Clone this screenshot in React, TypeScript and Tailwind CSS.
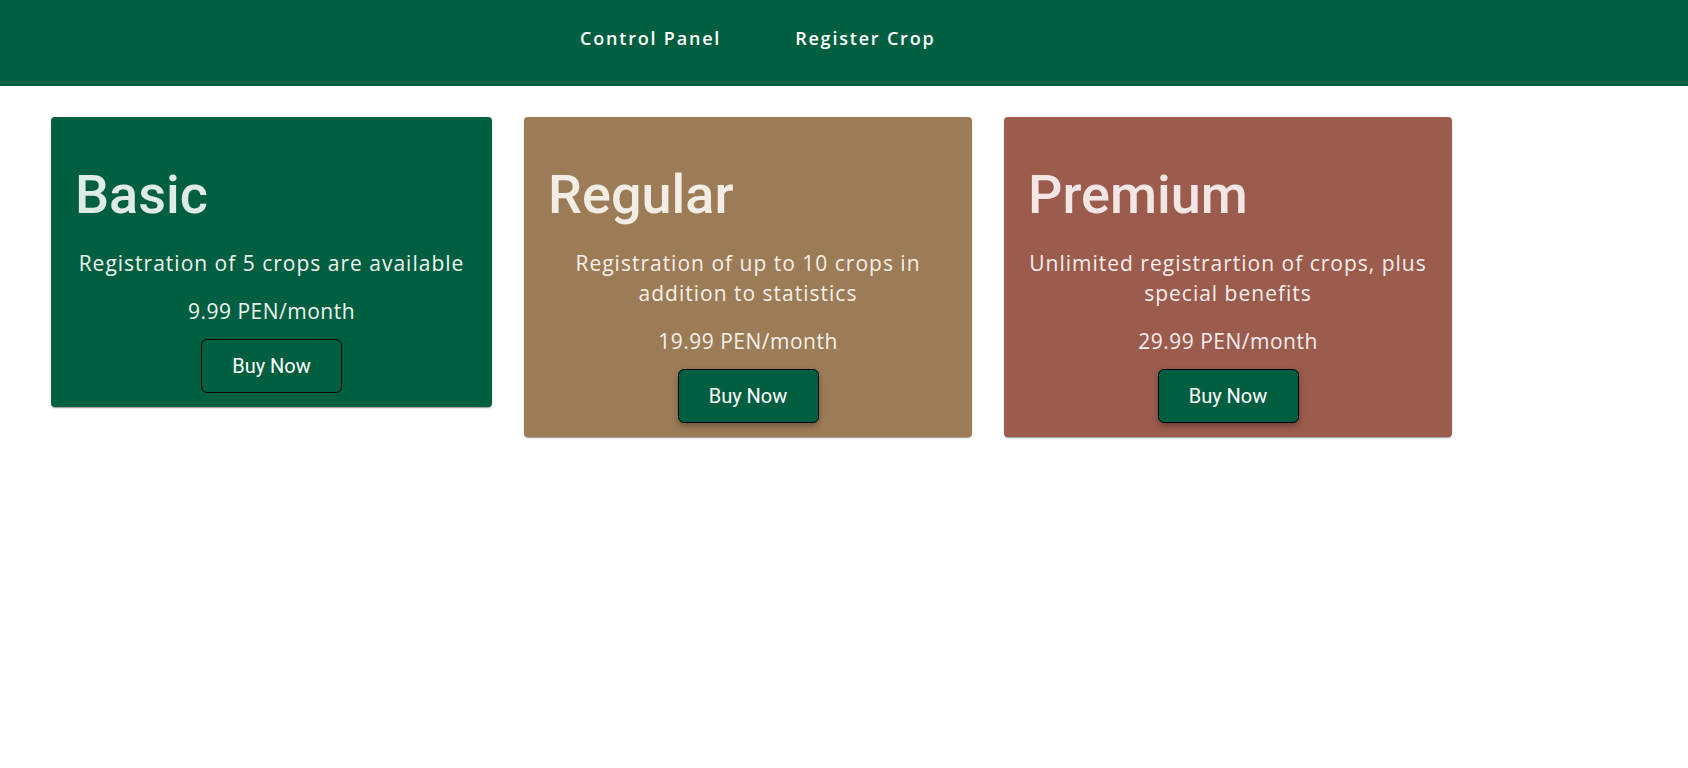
const plans = [
  {
    name: 'Basic',
    text: 'Registration of 5 crops are available',
    price: '9.99 PEN/month',
    card: 'w-[441px] bg-[#005f41]',
    title: 'text-[#dfebe5]',
    body: 'text-[#eef5f1]',
    button: 'shadow-none',
  },
  {
    name: 'Regular',
    text: 'Registration of up to 10 crops in addition to statistics',
    price: '19.99 PEN/month',
    card: 'w-[448px] bg-[#9c7c57]',
    title: 'text-[#f3ede6]',
    body: 'text-[#f6f0ea]',
    button: 'shadow-[0_3px_6px_rgba(0,0,0,0.3)]',
  },
  {
    name: 'Premium',
    text: 'Unlimited registrartion of crops, plus special benefits',
    price: '29.99 PEN/month',
    card: 'w-[448px] bg-[#9b5c4e]',
    title: 'text-[#f3e7e5]',
    body: 'text-[#f7eeec]',
    button: 'shadow-[0_3px_6px_rgba(0,0,0,0.3)]',
  },
];

export default function App() {
  return (
    <div className="min-h-screen w-full bg-white font-['Open_Sans',sans-serif]">
      <nav className="h-[86px] w-full bg-[#005f41]">
        <ul className="flex gap-[74px] pl-[580px] pt-[25px]">
          <li className="text-[18px] font-semibold tracking-[1.8px] text-white">
            Control Panel
          </li>
          <li className="text-[18px] font-semibold tracking-[1.8px] text-white">
            Register Crop
          </li>
        </ul>
      </nav>
      <main className="flex items-start gap-8 pl-[51px] pt-[31px]">
        {plans.map((p) => (
          <div
            key={p.name}
            className={`${p.card} rounded-[4px] px-6 pb-[14px] pt-[51px] shadow-[0_2px_1px_-1px_rgba(0,0,0,0.2),0_1px_1px_0_rgba(0,0,0,0.14),0_1px_3px_0_rgba(0,0,0,0.12)]`}
          >
            <h2
              className={`${p.title} font-['Roboto',sans-serif] text-[54px] font-medium leading-none`}
            >
              {p.name}
            </h2>
            <p
              className={`${p.body} -mx-[4px] mt-[26px] text-center text-[21px] leading-[30px] tracking-[1px]`}
            >
              {p.text}
            </p>
            <p
              className={`${p.body} mt-[18px] text-center text-[21px] leading-[30px] tracking-[0.5px]`}
            >
              {p.price}
            </p>
            <div className="mt-[13px] flex justify-center">
              <button
                className={`${p.button} h-[54px] w-[141px] rounded-md border border-black bg-[#005f41] font-['Roboto',sans-serif] text-[20px] text-white`}
              >
                Buy Now
              </button>
            </div>
          </div>
        ))}
      </main>
    </div>
  );
}
